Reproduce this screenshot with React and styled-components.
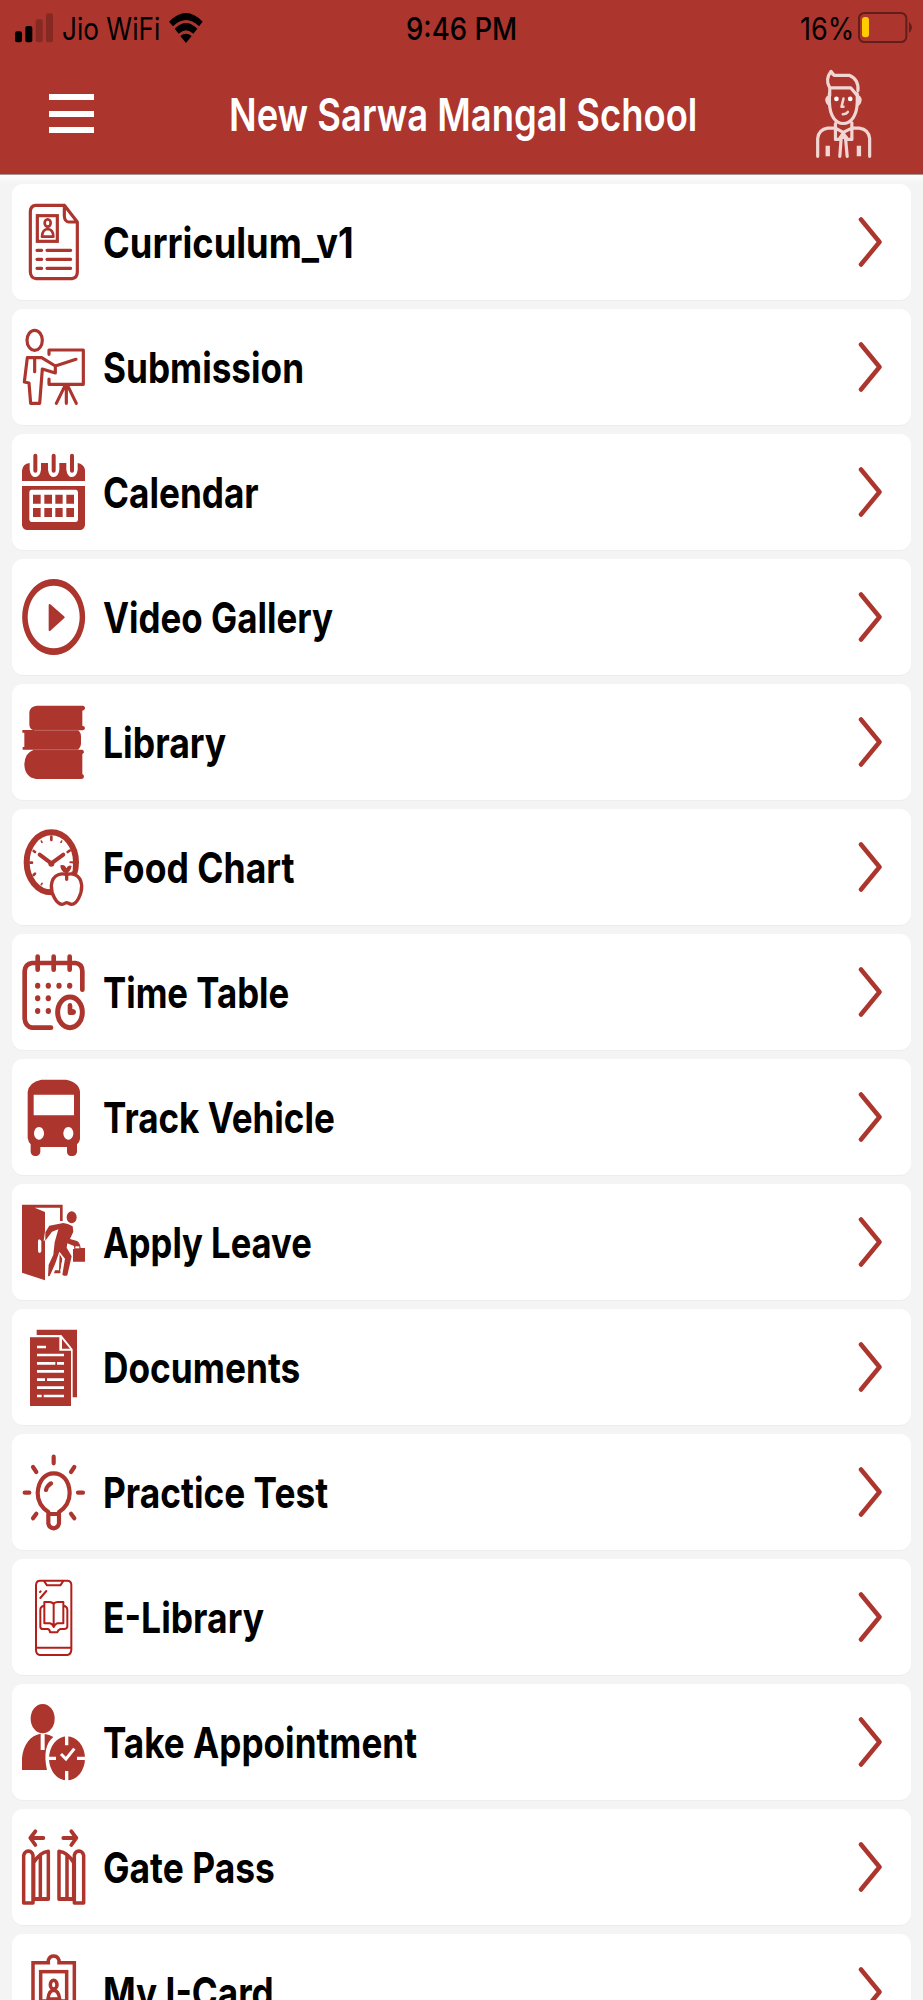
import React, { useLayoutEffect, useRef, useState } from "react";
import styled, { createGlobalStyle } from "styled-components";

const RED = "#ac352e";

const GlobalStyle = createGlobalStyle`
  html, body { margin: 0; padding: 0; background: #f4f4f4; }
  body { font-family: Inter, "Liberation Sans", sans-serif; }
  * { box-sizing: border-box; }
`;

const Screen = styled.div`
  width: 923px;
  height: 2000px;
  overflow: hidden;
  background: #f4f4f4;
`;

const Header = styled.header`
  height: 175px;
  background: ${RED};
  border-bottom: 1px solid #a9928f;
`;

const StatusBar = styled.div`
  height: 55px;
  display: grid;
  grid-template-columns: 1fr auto 1fr;
  align-items: center;
  color: #000;
`;

const StatusGroup = styled.div`
  display: flex;
  align-items: center;
  justify-content: ${(p) => (p.$end ? "flex-end" : "flex-start")};
  padding: ${(p) => (p.$end ? "0 11px 0 0" : "0 0 0 15px")};
  gap: ${(p) => p.$gap}px;
`;

const NavBar = styled.div`
  height: 117px;
  padding-left: 3px;
  display: grid;
  grid-template-columns: 1fr auto 1fr;
  align-items: center;
`;

const MenuButton = styled.button`
  margin: 0 0 0 46px;
  padding: 0;
  width: 45px;
  height: 39px;
  border: 0;
  background: none;
  display: flex;
  flex-direction: column;
  justify-content: space-between;
`;

const MenuBar = styled.span`
  height: 6px;
  background: #fff;
`;

const Avatar = styled.svg`
  display: block;
  justify-self: end;
  width: 57px;
  height: 89px;
  margin-right: 51px;
`;

const TextBox = styled.span`
  display: block;
  flex: none;
  white-space: nowrap;
  width: ${(p) => p.$width}px;
  padding-top: ${(p) => p.$drop || 0}px;
  font-size: ${(p) => p.$size}px;
  font-weight: ${(p) => p.$weight};
  line-height: 1.21;
  color: ${(p) => p.$color || "#000"};
`;

const Stretch = styled.span`
  display: inline-block;
  transform-origin: 0 50%;
`;

const List = styled.main`
  display: flex;
  flex-direction: column;
  gap: 9px;
  padding: 9px 12px 0;
  background: linear-gradient(#fdfdfd, #f4f4f4 9px);
`;

const Row = styled.div`
  flex: none;
  height: 116px;
  display: flex;
  align-items: center;
  padding: 0 28px 0 10px;
  border-radius: 11px;
  background: #fff;
  box-shadow: 0 1px 1px rgba(0, 0, 0, 0.03);
`;

const RowIcon = styled.svg`
  display: block;
  flex: none;
  width: 63px;
  height: 76px;
  margin-right: 18px;
  overflow: visible;
`;

const Chevron = styled.svg`
  display: block;
  width: 25px;
  height: 52px;
  margin-left: auto;
`;

/* Text condensed horizontally so that it fills exactly the given width. */
function FitText({ width, children, ...rest }) {
  const ref = useRef(null);
  const [scale, setScale] = useState(1);
  useLayoutEffect(() => {
    setScale(width / ref.current.offsetWidth);
  }, [width, children]);
  return (
    <TextBox $width={width} {...rest}>
      <Stretch ref={ref} style={{ transform: `scaleX(${scale})` }}>
        {children}
      </Stretch>
    </TextBox>
  );
}

const line = (w) => ({
  fill: "none",
  stroke: RED,
  strokeWidth: w,
  strokeLinecap: "round",
  strokeLinejoin: "round",
});

function CurriculumIcon() {
  return (
    <g {...line(9.5)}>
      <path d="M193 76H106Q91 78 91 96V276Q92 294 108 296H216Q232 293 232 276V126L193 76V108Q194 125 206 126H232" />
      <rect x="112" y="107" width="60" height="77" strokeLinejoin="miter" />
      <ellipse cx="143" cy="129" rx="9" ry="11" strokeWidth="8" />
      <path d="M126 170Q127 148 143 147Q160 148 160 170Z" strokeWidth="8" />
      <path d="M111 211H125M141 211H212M111 238H125M141 238H212M111 265H125M141 265H212" />
    </g>
  );
}

function SubmissionIcon() {
  return (
    <g {...line(9.5)}>
      <ellipse cx="104" cy="481" rx="23" ry="30" />
      <path d="M147 523V510H250V613H147V597" />
      <path d="M104 535V575M82 533H125L166 558L228 538M166 558V579L127 567L119 670H92L87 609L73 606L82 533" />
      <path d="M199 617V670M195 617L169 670M203 617L229 670" />
    </g>
  );
}

function CalendarIcon() {
  return (
    <g fill={RED}>
      <path d="M66 153V121Q68 102 89 99V119Q92 141 106 141Q120 140 123 119V99H144V119Q147 141 161 141Q175 140 178 119V99H199V119Q202 141 216 141Q230 140 233 119V99Q251 102 255 119V153Z" />
      <path fillRule="evenodd" d="M66 168H255V286Q253 298 242 300H80Q68 298 66 286ZM94 179Q88 180 88 187V269Q89 275 94 276H228Q234 275 234 269V187Q233 180 228 179Z" />
      <path d="M99 194h23v27h-23zM133 194h23v27h-23zM166 194h22v27h-22zM199 194h23v27h-23zM99 234h23v27h-23zM133 234h23v27h-23zM166 234h22v27h-22zM199 234h23v27h-23z" />
      <path d="M106 77V122M161 77V122M216 77V122" {...line(12)} />
    </g>
  );
}

function VideoIcon() {
  return (
    <>
      <path
        fill={RED}
        fillRule="evenodd"
        d="M161 447A94.5 114 0 1 1 160.900 447ZM161 467A78 94 0 1 0 161.100 467Z"
      />
      <path d="M149 525L191 562L149 600Z" fill={RED} stroke={RED} strokeWidth="6" strokeLinejoin="round" />
    </>
  );
}

function LibraryIcon() {
  return (
    <>
      <path
        fill={RED}
        d="M110 77H250Q256 79 255 86Q253 91 247 92V137Q255 138 255 145Q254 151 248 151H234Q243 157 243 170V192Q242 204 234 209H247Q252 211 252 217Q251 221 247 222V282Q252 284 252 290Q251 297 244 297H108Q74 292 73 253Q75 217 102 209H68V201H73V158H67V150H99Q88 147 88 133V96Q90 80 110 77Z"
      />
      <path d="M102 151H236M102 209H236" stroke="#c9807b" strokeWidth="2" />
    </>
  );
}

function FoodIcon() {
  return (
    <>
      <g {...line(8)}>
        <ellipse cx="154" cy="547" rx="74" ry="90" strokeWidth="18" />
        <path d="M154 470V480M91 548H96M212 548H217M101 513L105 516M203 516L209 512M101 585L105 581" />
        <path d="M124 483L126 487M185 483L183 487M124 614L126 610" strokeWidth="5" />
        <path d="M119 524L154 550L190 524" strokeWidth="12" />
        <circle cx="154" cy="551" r="5" fill={RED} />
      </g>
      <path
        d="M200 585C190 580 158 578 155 616C154 642 170 671 187 671C192 671 196 667 200 667C204 667 208 671 215 671C231 670 245 642 244 616C240 578 210 580 200 585Z"
        fill="#fff"
      />
      <path d="M176 548L218 550V574L176 576Z" fill="#fff" />
      <path d="M181 556Q194 552 199 565Q205 553 215 558Q211 578 197 580Q181 573 181 556Z" fill={RED} />
      <path
        d="M200 584C190 580 158 578 154 616C153 642 170 673 187 673C192 673 196 668 200 668C204 668 208 673 215 673C231 672 246 642 245 616C241 578 210 580 200 584ZM200 578V598"
        {...line(10)}
      />
    </>
  );
}

function TimeTableIcon() {
  return (
    <>
      <g {...line(14)}>
        <path d="M247 179V123Q246 101 226 99H96Q76 102 74 123V266Q76 290 96 293H153" />
        <path d="M113 80V119M161 80V119M209 80V119" />
        <ellipse cx="210" cy="247" rx="37" ry="46" strokeWidth="15" />
      </g>
      <path d="M203 225Q205 218 211 219Q217 220 217 227V237Q228 238 228 246Q227 255 218 255H208Q203 254 203 248Z" fill={RED} />
      <g fill={RED}>
        {[
          [113, 167], [145, 167], [177, 167], [209, 167],
          [113, 205], [145, 205], [113, 243], [145, 243],
        ].map(([x, y]) => (
          <ellipse key={`${x}-${y}`} cx={x} cy={y} rx="8" ry="9" />
        ))}
      </g>
    </>
  );
}

function BusIcon() {
  return (
    <path
      fill={RED}
      fillRule="evenodd"
      d="M124 449H198Q238 457 240 486V627Q238 639 231 643V666Q229 677 220 678H211Q202 676 201 666V651H121V666Q119 677 110 678H103Q94 676 92 666V643Q85 636 83 624V486Q86 457 124 449ZM101 494V556H222V494ZM117 591A15 19 0 1 0 117.100 591ZM205 591A15 19 0 1 0 205.100 591Z"
    />
  );
}

function LeaveIcon() {
  return (
    <g fill={RED}>
      <path fillRule="evenodd" d="M66 74H188V123H180V83H104L135 96V154L131 183L135 181V301L66 278ZM117 178Q114 179 114 184V214Q115 219 119 219Q124 218 124 213V184Q123 179 117 178Z" />
      <ellipse cx="215" cy="112" rx="15" ry="18" />
      <path d="M148 137L190 129Q203 130 218 139L220 155L210 177L231 183Q240 188 242 204H255V245H219V207H223L222 198L202 190L200 203L215 229L202 286Q195 290 187 284L195 236L178 215L165 253L149 288L144 289L146 254L160 224L164 187L175 148L156 155L136 182V157Z" />
      <path d="M226 199H238V205H226Z" fill="#fff" />
      <path d="M179 221L187 236L181 280H162L165 271H177Z" />
      <path d="M180 221L189 236L182 274" fill="none" stroke="#fff" strokeWidth="3" />
    </g>
  );
}

function DocumentsIcon() {
  return (
    <>
      <path d="M110 449H231V652H218V508L184 465H110Z" fill={RED} />
      <path d="M90 472H178V512H213V678H90ZM186 477L210 506H186Z" fill={RED} />
      <path
        d="M111 501H138M111 525H192M111 550H166M171 550H192M111 574H192M111 599H135M141 599H192M111 623H192M111 648H125M131 648H192"
        stroke="#fff"
        strokeWidth="8"
      />
    </>
  );
}

function BulbIcon() {
  return (
    <g {...line(12.5)}>
      <path d="M161 80V100M99 111L109 126M223 111L213 126M74 188H88M234 188H249M99 265L109 251M223 265L213 251" />
      <path d="M145 251V246Q113 225 113 189C115 150 136 130 161 130C187 130 208 150 209 189Q209 225 177 246V251M145 252H177V280Q174 294 161 295Q147 294 145 280ZM138 180Q141 167 153 160" />
    </g>
  );
}

function ELibraryIcon() {
  return (
    <g {...line(6)} stroke="#b31f18">
      <path d="M120 452H203Q214 453 214 465V660Q212 674 202 675H119Q108 673 108 660V465Q109 452 120 452ZM132 453L141 466H181L190 453M108 653H214" />
      <path d="M120 486L122 484M121 504L139 483" />
      <path d="M161 522Q155 515 147 516H133V580H150Q157 581 161 591Q165 582 172 580H190V516H174Q164 516 161 522V586M133 527Q121 529 121 539V591Q122 597 129 597H143Q150 599 150 607H172Q174 599 181 597H194Q202 596 202 589V539Q202 529 190 527" />
    </g>
  );
}

function AppointmentIcon() {
  return (
    <>
      <ellipse cx="128" cy="116" rx="36" ry="44" fill={RED} />
      <path d="M66 270V235C69 194 92 165 122 161V210H134V162Q148 164 160 171C137 188 131 224 141 270Z" fill={RED} />
      <ellipse cx="201" cy="235" rx="54" ry="66" fill={RED} />
      <path d="M200 167V196M200 273V303M145 235H168M231 235H257" stroke="#fff" strokeWidth="10" />
      <path d="M183 222L198 237L223 206" fill="none" stroke="#fff" strokeWidth="9" />
    </>
  );
}

function GateIcon() {
  const leaf =
    "M71 669V526Q74 514 85 513Q97 514 99 526V669ZM101 548Q118 518 145 514V658H101M121 525V656M101 656H145M101 540V658";
  return (
    <>
      <path d="M130 474H92M106 454L91 474L106 495M190 474H229M214 454L229 474L214 495" {...line(11.500)} />
      <g {...line(10.500)}>
        <path d={leaf} />
        <path d={leaf} transform="matrix(-1 0 0 1 322 0)" />
      </g>
    </>
  );
}

function CardIcon() {
  return (
    <g {...line(10.500)}>
      <path d="M99 1040V848H145V840Q149 828 161 828Q173 828 177 840V848H223V1040Z" strokeLinejoin="miter" />
      <rect x="122" y="875" width="78" height="88" strokeLinejoin="miter" />
      <ellipse cx="161" cy="914" rx="10" ry="13" />
      <path d="M144 957Q146 932 161 931Q176 932 179 957Z" />
    </g>
  );
}

const rows = [
  ["Curriculum_v1", 251, 72, CurriculumIcon],
  ["Submission", 201, 447, SubmissionIcon],
  ["Calendar", 155.5, 72, CalendarIcon],
  ["Video Gallery", 230, 447, VideoIcon],
  ["Library", 123, 72, LibraryIcon],
  ["Food Chart", 191.5, 447, FoodIcon],
  ["Time Table", 186.5, 72, TimeTableIcon],
  ["Track Vehicle", 231.5, 447, BusIcon],
  ["Apply Leave", 209, 72, LeaveIcon],
  ["Documents", 197.5, 447, DocumentsIcon],
  ["Practice Test", 225, 72, BulbIcon],
  ["E-Library", 161, 447, ELibraryIcon],
  ["Take Appointment", 314, 72, AppointmentIcon],
  ["Gate Pass", 171.5, 447, GateIcon],
  ["My I-Card", 171, 822, CardIcon],
];

function SignalIcon() {
  return (
    <svg width="38" height="30" viewBox="45 38 114 90">
      <rect x="45" y="93" width="21" height="33" rx="6" />
      <rect x="76" y="77" width="21" height="49" rx="6" />
      <rect x="107" y="57" width="21" height="69" rx="6" opacity="0.22" />
      <rect x="138" y="39" width="21" height="87" rx="6" opacity="0.22" />
    </svg>
  );
}

function WifiIcon() {
  return (
    <svg width="34" height="30" viewBox="509 36 102 90">
      <path d="M509 62Q560 10 610 62L599 76Q560 38 521 76ZM526 83Q560 49 594 83L582 98Q560 77 538 98ZM543 105Q560 91 577 105L560 126Z" />
    </svg>
  );
}

function BatteryIcon() {
  return (
    <svg width="54" height="31" viewBox="1188 36 162 93">
      <rect x="1191" y="39" width="142" height="87" rx="16" fill="none" stroke="#611e1a" strokeWidth="6" />
      <rect x="1200" y="51" width="21" height="61" rx="9" fill="#ffcc00" />
      <path d="M1341 65Q1350 72 1350 82Q1349 93 1341 99Z" fill="#611e1a" />
    </svg>
  );
}

function StudentAvatar() {
  return (
    <Avatar viewBox="1060 206 170 268" preserveAspectRatio="none">
      <g fill="none" stroke="#f1d6d4" strokeWidth="9.500" strokeLinecap="round" strokeLinejoin="round">
        <path d="M1104 286V263Q1089 238 1108 213L1117 225H1162Q1191 237 1188 271M1104 263H1167L1186 286M1117 225Q1113 222 1109 216" />
        <path d="M1103 280V306C1104 348 1122 370 1144 370C1168 370 1185 346 1186 306V280M1103 288Q1087 298 1103 314M1186 288Q1203 298 1187 314" />
        <path d="M1145 295L1139 320H1145M1143 342Q1154 342 1158 335" strokeWidth="7.500" />
        <path d="M1121 370V384L1144 397L1170 384V368M1121 384V418H1132L1144 399L1157 418H1170V384M1121 384H1098Q1071 388 1068 415V469M1170 384H1192Q1220 388 1223 415V469" />
        <path d="M1136 412H1153M1138 414L1134 469M1151 414L1156 469" />
        <path d="M1098 437V469M1191 437V469" strokeWidth="13" strokeLinecap="butt" />
      </g>
      <g fill="#fff">
        <circle cx="1124" cy="296" r="7" />
        <circle cx="1165" cy="296" r="7" />
      </g>
    </Avatar>
  );
}

export default function App() {
  return (
    <Screen>
      <GlobalStyle />
      <Header>
        <StatusBar>
          <StatusGroup $gap={9}>
            <SignalIcon />
            <FitText width={98} $size={31} $weight={400} $drop={2}>Jio WiFi</FitText>
            <WifiIcon />
          </StatusGroup>
          <FitText width={111} $size={31} $weight={500} $drop={2}>9:46 PM</FitText>
          <StatusGroup $end $gap={4}>
            <FitText width={54} $size={31} $weight={400} $drop={2}>16%</FitText>
            <BatteryIcon />
          </StatusGroup>
        </StatusBar>
        <NavBar>
          <MenuButton aria-label="Menu">
            <MenuBar />
            <MenuBar />
            <MenuBar />
          </MenuButton>
          <FitText width={468} $size={45.500} $weight={600} $color="#fff" $drop={2}>New Sarwa Mangal School</FitText>
          <StudentAvatar />
        </NavBar>
      </Header>
      <List>
        {rows.map(([label, width, top, Icon]) => (
          <Row key={label}>
            <RowIcon viewBox={`66 ${top} 189 228`} preserveAspectRatio="none">
              <Icon />
            </RowIcon>
            <FitText width={width} $size={42.500} $weight={700} $drop={1}>{label}</FitText>
            <Chevron viewBox="0 0 25 52">
              <path d="M3 3.500L21.500 26L3 48.500" {...line(4.500)} />
            </Chevron>
          </Row>
        ))}
      </List>
    </Screen>
  );
}
